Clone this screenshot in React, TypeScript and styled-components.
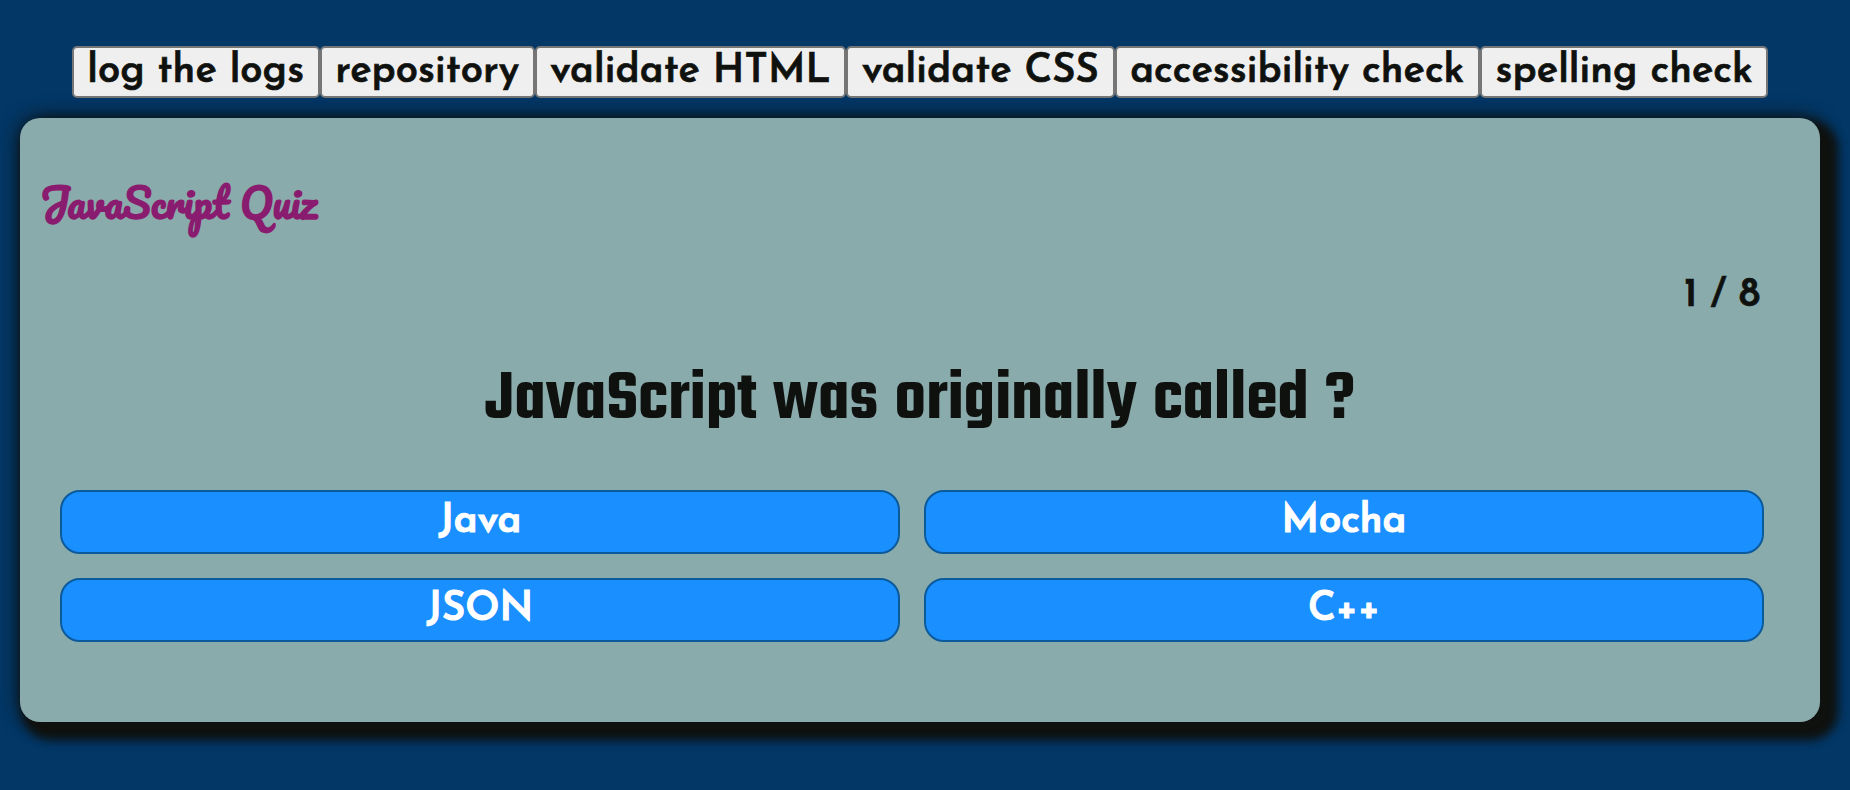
import React from 'react';
import styled, { createGlobalStyle } from 'styled-components';

const GlobalStyle = createGlobalStyle`
  * {
    box-sizing: border-box;
  }

  body {
    margin: 0;
    min-height: 100vh;
    background: #033766;
    color: #0f110e;
    font-family: 'Josefin Sans', Lato, sans-serif;
    overflow: hidden;
  }

  button {
    font-family: inherit;
    color: inherit;
    margin: 0;
  }
`;

const Page = styled.div`
  display: flex;
  flex-direction: column;
  gap: 20px;
  padding: 46px 30px 0 20px;
`;

const Toolbar = styled.nav`
  display: flex;
  justify-content: center;
`;

const ToolButton = styled.button`
  height: 52px;
  padding: 0 13.6px;
  border: 2px solid #767676;
  border-radius: 5px;
  background: #efefef;
  font-size: 40px;
  font-weight: 600;
  line-height: 40px;
  letter-spacing: 0.06px;
  -webkit-text-stroke: 0.7px #0f110e;
  white-space: nowrap;
`;

const Card = styled.main`
  display: flex;
  flex-direction: column;
  height: 604px;
  padding: 44px 56px 0 40px;
  border-radius: 20px;
  background: #8aabac;
  box-shadow: 10px 10px 10px 8px #0f110e, 0 0 20px #0f110e;
`;

const Title = styled.h1`
  margin: 0 0 0 -20px;
  color: #8a1c6f;
  font-family: Pacifico, Lato, cursive;
  font-size: 40px;
  font-weight: 700;
  line-height: 80px;
`;

const Counter = styled.p`
  margin: 34px 4px 0 0;
  text-align: right;
  font-size: 40px;
  font-weight: 600;
  line-height: 40px;
  -webkit-text-stroke: 0.7px #0f110e;
`;

const Question = styled.h2`
  margin: 45px -16px 0 0;
  text-align: center;
  font-family: Teko, Roboto, sans-serif;
  font-size: 72px;
  font-weight: 600;
  line-height: 80px;
  letter-spacing: 0.1px;
  word-spacing: 3px;
`;

const Answers = styled.div`
  display: grid;
  grid-template-columns: 1fr 1fr;
  gap: 24px;
  margin-top: 49px;
`;

const Answer = styled.button`
  height: 64px;
  padding: 0;
  border: 2px solid #0b5a9c;
  border-radius: 20px;
  background: #1a8fff;
  color: #fff;
  font-size: 40px;
  font-weight: 600;
  line-height: 40px;
  -webkit-text-stroke: 1.1px #fff;
`;

const tools = [
  'log the logs',
  'repository',
  'validate HTML',
  'validate CSS',
  'accessibility check',
  'spelling check',
];

const answers = ['Java', 'Mocha', 'JSON', 'C++'];

export default function App() {
  return (
    <>
      <GlobalStyle />
      <Page>
        <Toolbar>
          {tools.map((label) => (
            <ToolButton key={label}>{label}</ToolButton>
          ))}
        </Toolbar>
        <Card>
          <Title>JavaScript Quiz</Title>
          <Counter>1 / 8</Counter>
          <Question>JavaScript was originally called ?</Question>
          <Answers>
            {answers.map((label) => (
              <Answer key={label}>{label}</Answer>
            ))}
          </Answers>
        </Card>
      </Page>
    </>
  );
}
